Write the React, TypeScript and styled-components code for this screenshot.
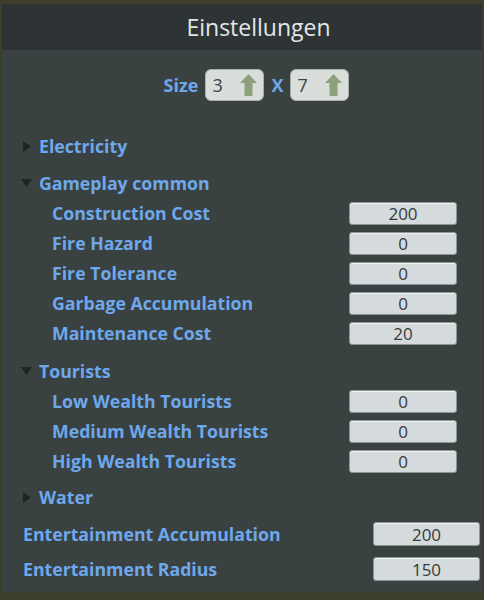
import styled, { createGlobalStyle } from 'styled-components'

const GlobalStyle = createGlobalStyle`
    html, body {
        margin: 0;
        padding: 0;
        background: #3d3f2c;
    }
    body {
        font-family: "Open Sans", "Liberation Sans", sans-serif;
    }
`

const Page = styled.div`
    width: 484px;
    height: 600px;
    background: #3d3f2c;
    padding: 4px 2px 8px 2px;
    box-sizing: border-box;
    display: flex;
`

const Panel = styled.div`
    flex: 1;
    display: flex;
    flex-direction: column;
    background: #3a4241;
`

const Header = styled.div`
    height: 46px;
    display: flex;
    align-items: center;
    justify-content: center;
    padding-left: 33px;
    background: #2e3436;
    color: #e2e6e6;
    font-size: 23px;
    font-weight: 500;
`

const Body = styled.div`
    display: flex;
    flex-direction: column;
    padding-top: 18px;
`

const SizeRow = styled.div`
    display: flex;
    align-items: center;
    justify-content: center;
    gap: 7px;
    height: 33px;
    padding-left: 29px;
    color: #6ea8ec;
    font-weight: 700;
    font-size: 18px;
`

const Stepper = styled.div`
    width: 59px;
    height: 32px;
    box-sizing: border-box;
    border: 1px solid #a9b0ac;
    border-radius: 6px;
    background: #d9dedb;
    display: flex;
    align-items: center;
    justify-content: space-between;
    padding: 0 6px 0 6px;
    color: #404444;
    font-size: 18px;
    font-weight: 500;
`

const Row = styled.div<{ $top?: number; $indent: number; $right?: number }>`
    display: flex;
    align-items: center;
    height: 30px;
    margin-top: ${ p => p.$top ?? 0 }px;
    padding-left: ${ p => p.$indent }px;
    padding-right: ${ p => p.$right ?? 25 }px;
    color: #6ea8ec;
    font-weight: 700;
    font-size: 17.7px;
`

const Caret = styled.span<{ $open?: boolean }>`
    width: 18px;
    display: inline-flex;
    padding-left: ${ p => p.$open ? 0 : 2 }px;
    box-sizing: border-box;
    svg { display: block; }
`

const Label = styled.span`
    flex: 1;
`

const Field = styled.div<{ $wide?: boolean }>`
    width: ${ p => p.$wide ? 107 : 108 }px;
    height: ${ p => p.$wide ? 24 : 23 }px;
    box-sizing: border-box;
    border: 1px solid #8e9694;
    border-radius: 3px;
    background: #d5dbdc;
    box-shadow: inset 0 1px 0 #eef2f2;
    display: flex;
    align-items: center;
    justify-content: center;
    color: #353a3a;
    font-size: 17px;
    font-weight: 400;
`

const UpArrow = () => (
    <svg width="17" height="22" viewBox="0 0 17 22">
        <path d="M8.5 0 L17 9 L12.5 9 L12.5 22 L4.5 22 L4.5 9 L0 9 Z" fill="#8ca17b" />
    </svg>
)

const Triangle = ({ open }: { open?: boolean }) => (
    <Caret $open={ open }>
        { open
            ? <svg width="11" height="8" viewBox="0 0 11 8"><path d="M0 0 L11 0 L5.5 8 Z" fill="#1f2425" /></svg>
            : <svg width="8" height="11" viewBox="0 0 8 11"><path d="M0 0 L8 5.5 L0 11 Z" fill="#1f2425" /></svg>
        }
    </Caret>
)

interface Setting {
    label: string;
    value: string;
}

const gameplay: Setting[] = [
    { label: 'Construction Cost', value: '200' },
    { label: 'Fire Hazard', value: '0' },
    { label: 'Fire Tolerance', value: '0' },
    { label: 'Garbage Accumulation', value: '0' },
    { label: 'Maintenance Cost', value: '20' },
]

const tourists: Setting[] = [
    { label: 'Low Wealth Tourists', value: '0' },
    { label: 'Medium Wealth Tourists', value: '0' },
    { label: 'High Wealth Tourists', value: '0' },
]

function Group(props: { title: string; open?: boolean; top: number; items?: Setting[] }) {
    const { title, open, top, items } = props
    return (
        <>
            <Row $top={ top } $indent={ 19 }>
                <Triangle open={ open } />
                <Label>{ title }</Label>
            </Row>
            { open && items?.map(item =>
                <Row key={ item.label } $indent={ 50 }>
                    <Label>{ item.label }</Label>
                    <Field>{ item.value }</Field>
                </Row>
            ) }
        </>
    )
}

export default function App() {
    return (
        <Page>
            <GlobalStyle />
            <Panel>
                <Header>Einstellungen</Header>
                <Body>
                    <SizeRow>
                        <span>Size</span>
                        <Stepper><span>3</span><UpArrow /></Stepper>
                        <span>X</span>
                        <Stepper><span>7</span><UpArrow /></Stepper>
                    </SizeRow>
                    <Group title="Electricity" top={ 30 } />
                    <Group title="Gameplay common" open top={ 7 } items={ gameplay } />
                    <Group title="Tourists" open top={ 8 } items={ tourists } />
                    <Group title="Water" top={ 6 } />
                    <Row $top={ 7 } $indent={ 21 } $right={ 2 }>
                        <Label>Entertainment Accumulation</Label>
                        <Field $wide>200</Field>
                    </Row>
                    <Row $top={ 5 } $indent={ 21 } $right={ 2 }>
                        <Label>Entertainment Radius</Label>
                        <Field $wide>150</Field>
                    </Row>
                </Body>
            </Panel>
        </Page>
    )
}
